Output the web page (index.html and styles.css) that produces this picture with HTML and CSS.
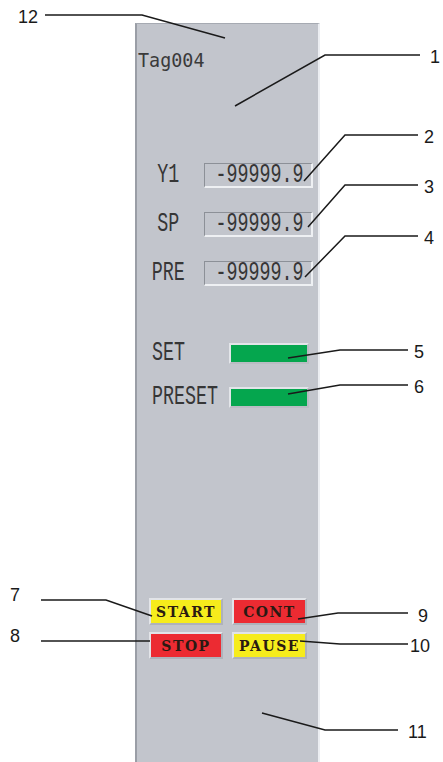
FILE: index.html
```html
<!DOCTYPE html>
<html>
<head>
<meta charset="utf-8">
<link rel="stylesheet" href="styles.css">
</head>
<body>
<div class="page">
  <div class="panel">
    <div class="tag"><span class="cond tagtext">Tag004</span></div>
    <div class="values">
      <div class="vrow"><div class="vlabel"><span class="cond-c">Y1</span></div><div class="vbox"><span class="cond-r">-99999.9</span></div></div>
      <div class="vrow"><div class="vlabel"><span class="cond-c">SP</span></div><div class="vbox"><span class="cond-r">-99999.9</span></div></div>
      <div class="vrow"><div class="vlabel"><span class="cond-c">PRE</span></div><div class="vbox"><span class="cond-r">-99999.9</span></div></div>
    </div>
    <div class="lamps">
      <div class="lrow"><div class="llabel"><span class="cond">SET</span></div><div class="lamp"></div></div>
      <div class="lrow"><div class="llabel"><span class="cond">PRESET</span></div><div class="lamp"></div></div>
    </div>
    <div class="buttons">
      <div class="btn yellow">START</div>
      <div class="btn red">CONT</div>
      <div class="btn red">STOP</div>
      <div class="btn yellow">PAUSE</div>
    </div>
  </div>
  <svg class="callouts" width="443" height="762" viewBox="0 0 443 762">
    <g fill="none" stroke="#1a1a1a" stroke-width="1.5">
      <polyline points="45,15 142,15 225,38"/>
      <polyline points="420,55 325,55 235,106"/>
      <polyline points="418,135 345,135 304,181"/>
      <polyline points="418,185 345,185 308,227"/>
      <polyline points="418,236 345,236 305,277"/>
      <polyline points="408,350 340,350 288,358"/>
      <polyline points="408,385 340,385 288,394"/>
      <polyline points="41,600 106,600 152,616"/>
      <polyline points="41,641 150,641"/>
      <polyline points="408,613 338,613 298,619"/>
      <polyline points="408,644 340,644 300,641"/>
      <polyline points="398,730 325,730 262,713"/>
    </g>
    <g class="num">
      <text x="18" y="23">12</text>
      <text x="430" y="63">1</text>
      <text x="424" y="143">2</text>
      <text x="424" y="193">3</text>
      <text x="424" y="244">4</text>
      <text x="414" y="358">5</text>
      <text x="414" y="393">6</text>
      <text x="10" y="601">7</text>
      <text x="10" y="642">8</text>
      <text x="418" y="622">9</text>
      <text x="410" y="652">10</text>
      <text x="408" y="738">11</text>
    </g>
  </svg>
</div>
</body>
</html>
```

FILE: styles.css
```css
html, body {
  margin: 0;
  padding: 0;
  background: #ffffff;
}
.page {
  position: relative;
  width: 443px;
  height: 762px;
  overflow: hidden;
}
.panel {
  box-sizing: border-box;
  margin-left: 135px;
  margin-top: 23px;
  width: 185px;
  height: 739px;
  background: #c2c5cc;
  border-left: 2px solid #9a9ea6;
  border-top: 1px solid #a6aab2;
  border-right: 2px solid #eceef2;
  display: flex;
  flex-direction: column;
  font-family: "Liberation Mono", "DejaVu Sans Mono", monospace;
  color: #363636;
}
.cond, .cond-c, .cond-r {
  display: inline-block;
  transform: scaleX(0.68);
}
.cond { transform-origin: left center; }
.cond-c { transform-origin: center center; }
.cond-r { transform-origin: right center; }

.tag {
  margin-top: 24px;
  height: 24px;
  line-height: 24px;
  padding-left: 1px;
  font-size: 20px;
  white-space: nowrap;
  font-family: "DejaVu Sans Mono", monospace;
  color: #3a3a3a;
}
.tagtext { transform: scaleX(0.92); font-weight: 300; }

.values {
  margin-top: 91px;
  display: flex;
  flex-direction: column;
  gap: 24px;
}
.vrow {
  display: flex;
  align-items: center;
  height: 25px;
  gap: 4px;
}
.vlabel {
  width: 63px;
  display: flex;
  justify-content: center;
  font-size: 27px;
  line-height: 25px;
  white-space: nowrap;
}
.vbox {
  box-sizing: border-box;
  width: 109px;
  height: 25px;
  border-top: 1px solid #8c9097;
  border-left: 1px solid #8c9097;
  border-bottom: 2px solid #eef0f3;
  border-right: 2px solid #eef0f3;
  display: flex;
  justify-content: flex-end;
  align-items: center;
  padding-right: 8px;
  font-size: 28px;
  line-height: 22px;
  white-space: nowrap;
}
.vbox .cond-r { transform: scaleX(0.655); }

.lamps {
  margin-top: 57px;
  display: flex;
  flex-direction: column;
  gap: 23px;
}
.lrow {
  display: flex;
  align-items: center;
  height: 21px;
  padding-left: 15px;
}
.llabel {
  width: 77px;
  font-size: 27px;
  line-height: 21px;
  white-space: nowrap;
}
.lamp {
  box-sizing: border-box;
  width: 80px;
  height: 21px;
  background: #05a64e;
  border: 2px solid #e3e5e9;
  border-right-color: #b9bcc3;
  border-bottom-color: #b9bcc3;
}

.buttons {
  margin-top: 190px;
  margin-left: 12px;
  display: grid;
  grid-template-columns: 74px 75px;
  grid-auto-rows: 27px;
  column-gap: 9px;
  row-gap: 7px;
}
.btn {
  box-sizing: border-box;
  border: 2px solid #e2e4e8;
  border-right-color: #aeb2ba;
  border-bottom-color: #aeb2ba;
  display: flex;
  align-items: center;
  justify-content: center;
  font-family: "DejaVu Serif", "Liberation Serif", serif;
  font-weight: bold;
  font-size: 14px;
  letter-spacing: 1.5px;
  color: #2a1a12;
}
.yellow { background: #f6ec1c; }
.red { background: #ec2b32; }

.callouts {
  position: absolute;
  left: 0;
  top: 0;
  pointer-events: none;
}
.num text {
  font-family: "Liberation Sans", Arial, sans-serif;
  font-size: 18px;
  fill: #1a1a1a;
}
```
